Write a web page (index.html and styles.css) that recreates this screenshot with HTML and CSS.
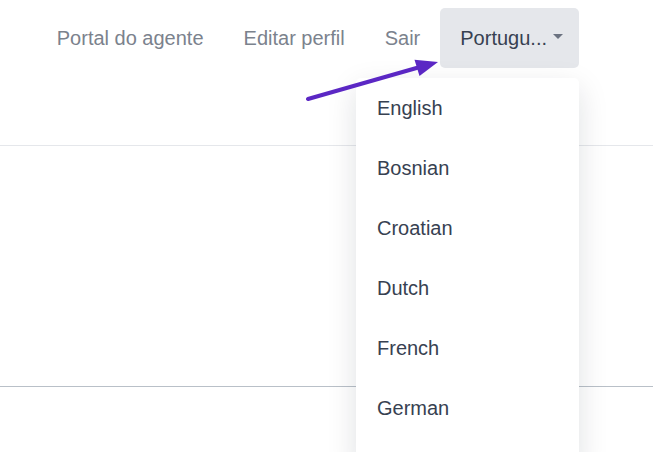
FILE: index.html
```html
<!DOCTYPE html>
<html lang="pt">

<head>
    <meta charset="UTF-8">
    <meta name="viewport" content="width=device-width, initial-scale=1.0">
    <title>Portal do agente</title>
    <link rel="stylesheet" href="styles.css">
</head>

<body>
    <header class="topbar">
        <nav class="nav">
            <a href="#" class="nav-link">Portal do agente</a>
            <a href="#" class="nav-link">Editar perfil</a>
            <a href="#" class="nav-link">Sair</a>
            <div class="lang">
                <button class="lang-toggle">Portugu...<span class="caret"></span></button>
                <ul class="lang-menu">
                    <li><a href="#">English</a></li>
                    <li><a href="#">Bosnian</a></li>
                    <li><a href="#">Croatian</a></li>
                    <li><a href="#">Dutch</a></li>
                    <li><a href="#">French</a></li>
                    <li><a href="#">German</a></li>
                </ul>
            </div>
        </nav>
    </header>

    <section class="content"></section>

    <!-- seta de destaque -->
    <svg class="pointer" width="653" height="140" viewBox="0 0 653 140">
        <line x1="308" y1="99" x2="420" y2="67" stroke="#5b27c4" stroke-width="4" stroke-linecap="round" />
        <polygon points="438,62 414.5,59.8 419.5,76" fill="#5b27c4" />
    </svg>
</body>

</html>
```

FILE: styles.css
```css
html,
body {
    height: 452px;
    overflow: hidden;
}

body {
    position: relative;
    margin: 0;
    font-family: "Liberation Sans", Arial, sans-serif;
    background: #fff;
}

.topbar {
    position: relative;
    z-index: 2;
    height: 145px;
    border-bottom: 1px solid #e5e7eb;
}

.nav {
    display: flex;
    justify-content: flex-end;
    align-items: center;
    padding: 8px 74px 0 0;
}

.nav-link {
    padding: 0 20px;
    font-size: 20px;
    color: #7b828d;
    text-decoration: none;
}

.lang {
    position: relative;
}

.lang-toggle {
    display: flex;
    align-items: center;
    height: 60px;
    padding: 0 16px 0 20px;
    border: 0;
    border-radius: 5px;
    background: #e5e7eb;
    font-family: inherit;
    font-size: 20px;
    color: #374151;
}

.caret {
    width: 0;
    height: 0;
    margin: -3px 0 0 6px;
    border-top: 5px solid #6b7280;
    border-left: 5px solid transparent;
    border-right: 5px solid transparent;
}

.lang-menu {
    position: absolute;
    top: 70px;
    right: 0;
    width: 223px;
    margin: 0;
    padding: 0 0 30px;
    list-style: none;
    background: #fff;
    border-radius: 5px;
    box-shadow: 0 10px 30px rgba(17, 24, 39, 0.13);
}

.lang-menu a {
    display: block;
    height: 60px;
    line-height: 60px;
    padding-left: 21px;
    font-size: 20px;
    color: #374151;
    text-decoration: none;
}

.content {
    height: 240px;
    border-bottom: 1px solid #b9c0c8;
}

.pointer {
    position: absolute;
    top: 0;
    left: 0;
    z-index: 3;
}
```
